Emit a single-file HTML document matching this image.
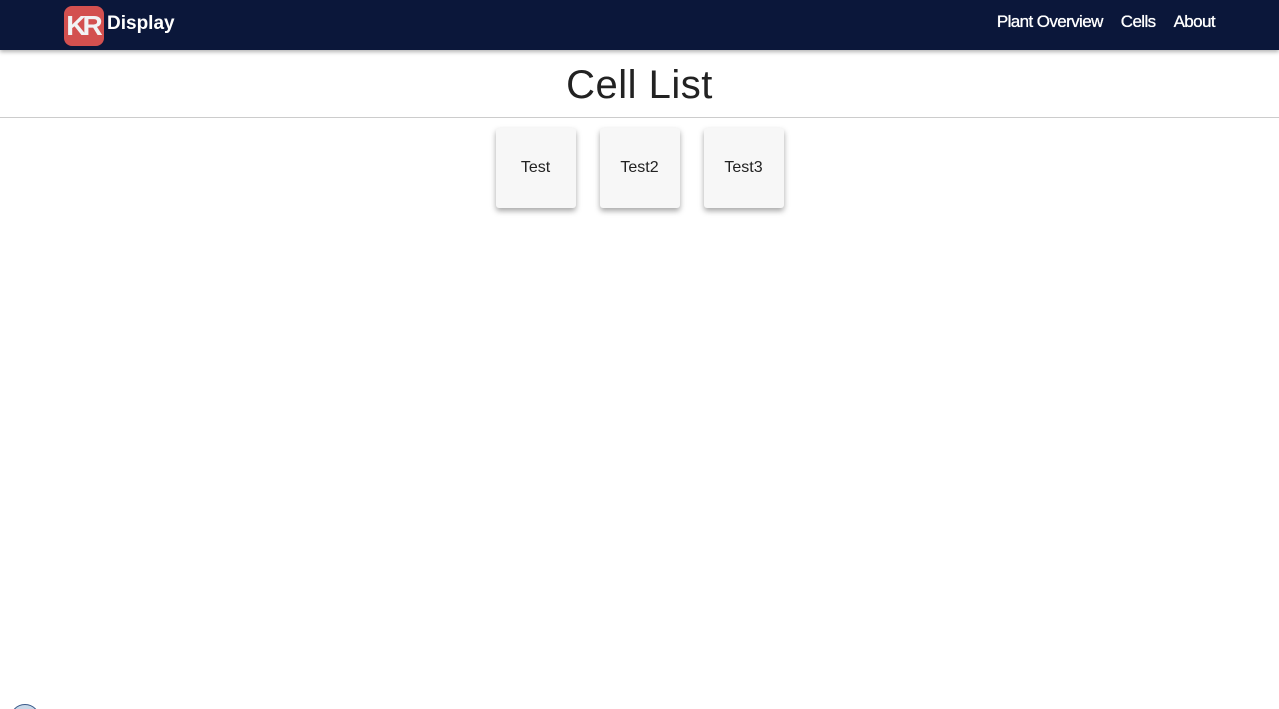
<!DOCTYPE html>
<html><head><meta charset="utf-8"><style>
html,body{margin:0;width:1279px;height:709px;overflow:hidden}
body{background:#fff;font-family:"Liberation Sans",sans-serif;position:relative}
.nav{height:50px;background:#0b173a;box-shadow:0 2px 4px rgba(0,0,0,.3);position:relative}
.logo{position:absolute;left:64px;top:6px;width:40px;height:40px;background:#de5451;border-radius:8px;color:#fff;font-weight:bold;font-size:28px;line-height:40px;text-align:center;letter-spacing:-4px;text-indent:-3px;opacity:.95}
.brand{position:absolute;left:107px;top:13px;color:#fff;font-weight:bold;font-size:19px}
.links{position:absolute;right:64px;top:12px;color:#fff;font-size:17px;font-weight:bold;letter-spacing:-0.6px;-webkit-text-stroke:0}
.links span{margin-left:18px;font-weight:normal;text-shadow:0 0 0.4px #fff,0 0 0.4px #fff}
h1{margin:0;text-align:center;font-weight:normal;font-size:40px;color:#222;height:67px;line-height:70px;border-bottom:1px solid #ccc;letter-spacing:0.5px}
.cards{text-align:center;margin-top:10px;font-size:0}
.card{display:inline-block;width:80px;height:80px;margin:0 12px;background:#f7f7f7;border-radius:3px;box-shadow:0 3px 6px rgba(0,0,0,.35);font-size:16px;line-height:80px;color:#222}
.circ{position:absolute;left:10px;top:704px;width:30px;height:30px;border-radius:50%;border:1.5px solid #3a5a8a;background:#c8d8e8;box-sizing:border-box}
</style></head><body>
<div class="nav"><div class="logo">KR</div><div class="brand">Display</div>
<div class="links"><span>Plant Overview</span><span>Cells</span><span>About</span></div></div>
<h1>Cell List</h1>
<div class="cards"><div class="card">Test</div><div class="card">Test2</div><div class="card">Test3</div></div>
<div class="circ"></div>
</body></html>
